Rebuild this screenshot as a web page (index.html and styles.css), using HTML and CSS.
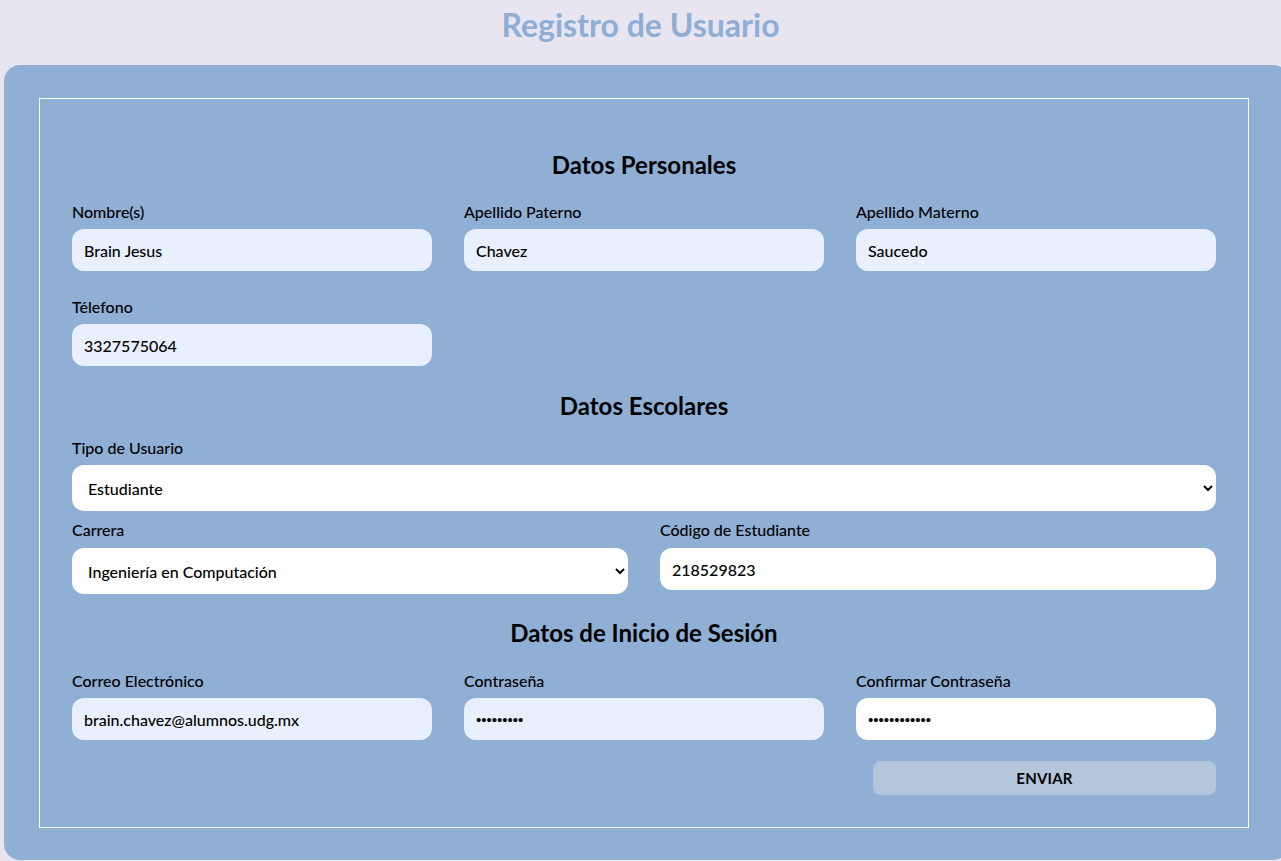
FILE: index.html
```html
<!DOCTYPE html>
<html lang="es">
<head>
<meta charset="utf-8">
<title>Registro de Usuario</title>
<link rel="stylesheet" href="styles.css">
</head>
<body>
<h1 class="title">Registro de Usuario</h1>
<div class="card">
  <form class="frame">
    <h2 class="section first">Datos Personales</h2>
    <div class="row three">
      <div class="field"><label>Nombre(s)</label><input class="auto" type="text" value="Brain Jesus"></div>
      <div class="field"><label>Apellido Paterno</label><input class="auto" type="text" value="Chavez"></div>
      <div class="field"><label>Apellido Materno</label><input class="auto" type="text" value="Saucedo"></div>
    </div>
    <div class="row three gap-top">
      <div class="field"><label>Télefono</label><input class="auto" type="text" value="3327575064"></div>
    </div>

    <h2 class="section school">Datos Escolares</h2>
    <div class="row one">
      <div class="field"><label>Tipo de Usuario</label>
        <select class="sel"><option>Estudiante</option></select>
      </div>
    </div>
    <div class="row two second">
      <div class="field"><label>Carrera</label>
        <select class="sel"><option>Ingeniería en Computación</option></select>
      </div>
      <div class="field"><label>Código de Estudiante</label><input class="plain" type="text" value="218529823"></div>
    </div>

    <h2 class="section login">Datos de Inicio de Sesión</h2>
    <div class="row three">
      <div class="field"><label>Correo Electrónico</label><input class="auto" type="text" value="brain.chavez@alumnos.udg.mx"></div>
      <div class="field"><label>Contraseña</label><input class="auto pass" type="password" value="123456789"></div>
      <div class="field"><label>Confirmar Contraseña</label><input class="plain pass" type="password" value="123456789012"></div>
    </div>
    <div class="actions">
      <button type="button" class="send">ENVIAR</button>
    </div>
  </form>
</div>
</body>
</html>
```

FILE: styles.css
```css
* { box-sizing: border-box; }
html, body { margin: 0; padding: 0; }
body {
  background: #e8e5f0;
  font-family: "Lato", "Liberation Sans", sans-serif;
  color: #000;
  height: 861px;
  overflow: hidden;
}
.title {
  margin: 0;
  padding-top: 5px;
  height: 45px;
  line-height: 40px;
  text-align: center;
  font-size: 32px;
  font-weight: 700;
  color: #8eaed5;
}
.card {
  margin: 20px 0 0 4px;
  width: 1285px;
  height: 795px;
  background: #8fafd5;
  border-radius: 16px;
  padding: 33px 36px 32px 35px;
}
.frame {
  width: 1210px;
  height: 730px;
  border: 1px solid #ffffff;
  padding: 52px 32px 0 32px;
}
.section {
  margin: 0;
  text-align: center;
  font-size: 24px;
  font-weight: 700;
  line-height: 28px;
}
.section.first { margin-bottom: 23px; }
.section.school { margin-top: 26px; margin-bottom: 18px; }
.section.login { margin-top: 25px; margin-bottom: 24px; }
.row { display: grid; column-gap: 32px; }
.row.three { grid-template-columns: repeat(3, 1fr); }
.row.two { grid-template-columns: repeat(2, 1fr); }
.row.one { grid-template-columns: 1fr; }
.row.gap-top { margin-top: 26px; }
.row.second { margin-top: 9px; }
.field { display: flex; flex-direction: column; align-items: stretch; }
.field label {
  font-size: 16px;
  line-height: 20px;
  margin-bottom: 7px;
  font-weight: 500;
}
.row.second .field label { margin-bottom: 8px; }
input, select, button { font-family: inherit; color: #000; }
input {
  height: 42px;
  border: none;
  border-radius: 12px;
  padding: 0 12px;
  font-size: 16px;
  font-weight: 500;
  outline: none;
}
input.pass {
  font-family: "Liberation Sans", sans-serif;
  font-size: 15px;
}
input.auto { background: #e8f0fe; }
input.plain { background: #ffffff; }
.sel {
  height: 46px;
  border: none;
  border-radius: 12px;
  background-color: #ffffff;
  padding: 0 8px 0 12px;
  font-size: 16px;
  font-weight: 500;
  outline: none;
}
.actions {
  display: flex;
  justify-content: flex-end;
  margin-top: 21px;
}
.send {
  width: 343px;
  height: 34px;
  border: none;
  border-radius: 8px;
  background: #b3c6dc;
  font-size: 15px;
  font-weight: 700;
  letter-spacing: 0.2px;
}
```
